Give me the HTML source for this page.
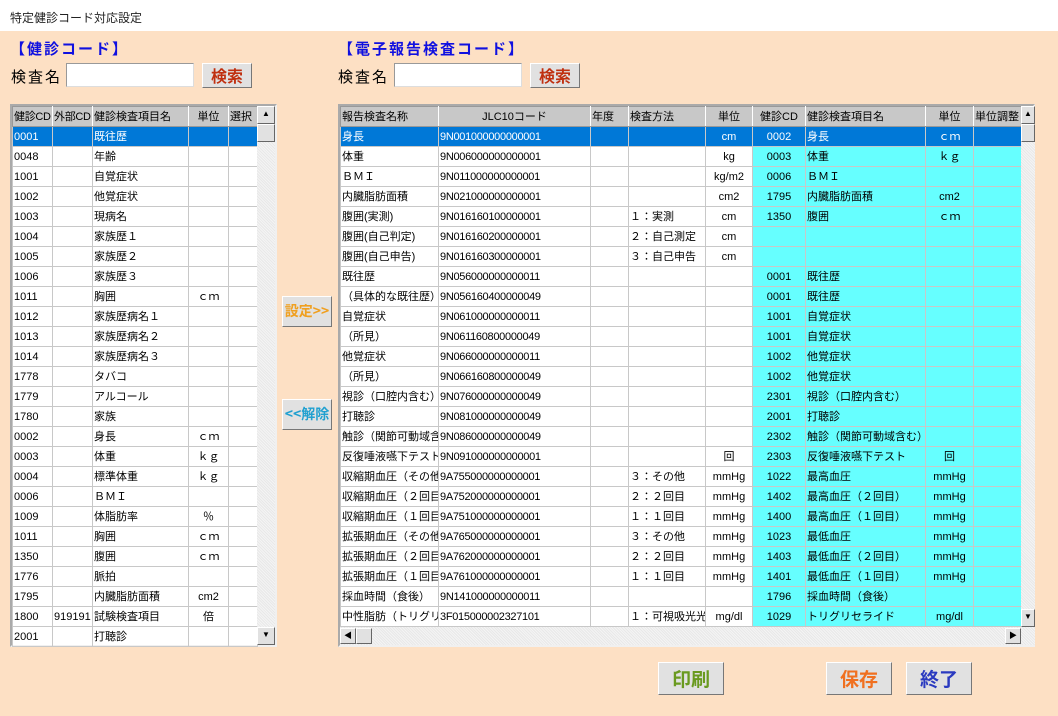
<!DOCTYPE html>
<html><head><meta charset="utf-8"><style>
*{box-sizing:border-box;margin:0;padding:0}
body{width:1058px;height:716px;background:#fde0c4;font-family:"Liberation Sans","Noto Sans CJK JP",sans-serif;position:relative;overflow:hidden}
.title{position:absolute;left:0;top:0;width:1058px;height:31px;background:#fff;font-size:12px;padding:9px 0 0 10px;color:#222}
.lbl{position:absolute;font-size:15px;font-weight:bold;color:#1010e0;letter-spacing:2px}
.sl{position:absolute;font-size:15px;color:#000;letter-spacing:2px}
.inp{position:absolute;width:128px;height:24px;background:#fff;border:1px solid #999;border-right-color:#ddd;border-bottom-color:#ddd}
.btn{position:absolute;background:#e1e1e1;border:1px solid #fff;border-right-color:#777;border-bottom-color:#777;font-weight:bold;text-align:center;font-family:"Noto Sans CJK JP",sans-serif}
.grid{position:absolute;background:#fff;border:2px solid #f0f0f0;border-top-color:#aaa;border-left-color:#aaa}
table{border-collapse:collapse;table-layout:fixed;font-size:11px;font-family:"Liberation Sans","Noto Sans CJK JP",sans-serif}
td,th{height:20px;border:1px solid #c8c8c8;white-space:nowrap;overflow:hidden;padding:0 1px;font-weight:normal;line-height:18px}
th{background:#c8c8c8;border-color:#999;border-right:1px solid #fff;text-align:left}
tr.sel td{background:#0078d7;color:#fff}
.c{text-align:center}
.cy{background:#6ff}
.n{letter-spacing:-0.3px}
.vs{position:absolute;background:#ececec;background-image:repeating-linear-gradient(45deg,#f4f4f4 0 1px,#e8e8e8 1px 2px)}
.ar{position:absolute;background:#e1e1e1;border:1px solid #fff;border-right-color:#666;border-bottom-color:#666;font-size:8px;text-align:center;line-height:14px}
</style></head><body>
<div class="title">特定健診コード対応設定</div>
<div class="lbl" style="left:10px;top:38px">【健診コード】</div>
<div class="lbl" style="left:338px;top:38px">【電子報告検査コード】</div>
<div class="sl" style="left:11px;top:66px">検査名</div>
<div class="inp" style="left:66px;top:63px"></div>
<div class="btn" style="left:202px;top:63px;width:50px;height:25px;color:#c03010;font-size:16px;line-height:22px">検索</div>
<div class="sl" style="left:338px;top:66px">検査名</div>
<div class="inp" style="left:394px;top:63px"></div>
<div class="btn" style="left:530px;top:63px;width:50px;height:25px;color:#c03010;font-size:16px;line-height:22px">検索</div>

<div class="grid" style="left:10px;top:104px;width:267px;height:543px">
<table style="width:245px">
<colgroup><col style="width:40px"><col style="width:40px"><col style="width:96px"><col style="width:40px"><col style="width:29px"></colgroup>
<tr><th class="n">健診CD</th><th class="n">外部CD</th><th>健診検査項目名</th><th class="c">単位</th><th>選択</th></tr>
<tr class="sel"><td>0001</td><td></td><td>既往歴</td><td></td><td></td></tr>
<tr><td>0048</td><td></td><td>年齢</td><td></td><td></td></tr>
<tr><td>1001</td><td></td><td>自覚症状</td><td></td><td></td></tr>
<tr><td>1002</td><td></td><td>他覚症状</td><td></td><td></td></tr>
<tr><td>1003</td><td></td><td>現病名</td><td></td><td></td></tr>
<tr><td>1004</td><td></td><td>家族歴１</td><td></td><td></td></tr>
<tr><td>1005</td><td></td><td>家族歴２</td><td></td><td></td></tr>
<tr><td>1006</td><td></td><td>家族歴３</td><td></td><td></td></tr>
<tr><td>1011</td><td></td><td>胸囲</td><td class="c">ｃｍ</td><td></td></tr>
<tr><td>1012</td><td></td><td>家族歴病名１</td><td></td><td></td></tr>
<tr><td>1013</td><td></td><td>家族歴病名２</td><td></td><td></td></tr>
<tr><td>1014</td><td></td><td>家族歴病名３</td><td></td><td></td></tr>
<tr><td>1778</td><td></td><td>タバコ</td><td></td><td></td></tr>
<tr><td>1779</td><td></td><td>アルコール</td><td></td><td></td></tr>
<tr><td>1780</td><td></td><td>家族</td><td></td><td></td></tr>
<tr><td>0002</td><td></td><td>身長</td><td class="c">ｃｍ</td><td></td></tr>
<tr><td>0003</td><td></td><td>体重</td><td class="c">ｋｇ</td><td></td></tr>
<tr><td>0004</td><td></td><td>標準体重</td><td class="c">ｋｇ</td><td></td></tr>
<tr><td>0006</td><td></td><td>ＢＭＩ</td><td></td><td></td></tr>
<tr><td>1009</td><td></td><td>体脂肪率</td><td class="c">％</td><td></td></tr>
<tr><td>1011</td><td></td><td>胸囲</td><td class="c">ｃｍ</td><td></td></tr>
<tr><td>1350</td><td></td><td>腹囲</td><td class="c">ｃｍ</td><td></td></tr>
<tr><td>1776</td><td></td><td>脈拍</td><td></td><td></td></tr>
<tr><td>1795</td><td></td><td>内臓脂肪面積</td><td class="c">cm2</td><td></td></tr>
<tr><td>1800</td><td>919191</td><td>試験検査項目</td><td class="c">倍</td><td></td></tr>
<tr><td>2001</td><td></td><td>打聴診</td><td></td><td></td></tr>
</table>
<div class="vs" style="left:245px;top:0;width:18px;height:539px"></div>
<div class="ar" style="left:245px;top:0;width:18px;height:18px">▲</div>
<div class="ar" style="left:245px;top:18px;width:18px;height:18px"></div>
<div class="ar" style="left:245px;top:521px;width:18px;height:18px">▼</div>
</div>

<div class="btn" style="left:282px;top:296px;width:50px;height:31px;color:#f0a020;font-size:14px;line-height:29px">設定&gt;&gt;</div>
<div class="btn" style="left:282px;top:399px;width:50px;height:31px;color:#20a0d0;font-size:14px;line-height:29px">&lt;&lt;解除</div>

<div class="grid" style="left:338px;top:104px;width:697px;height:543px">
<table style="width:681px">
<colgroup><col style="width:98px"><col style="width:152px"><col style="width:38px"><col style="width:77px"><col style="width:47px"><col style="width:53px"><col style="width:120px"><col style="width:48px"><col style="width:48px"></colgroup>
<tr><th>報告検査名称</th><th class="c">JLC10コード</th><th>年度</th><th>検査方法</th><th class="c">単位</th><th class="c">健診CD</th><th>健診検査項目名</th><th class="c">単位</th><th>単位調整</th></tr>
<tr class="sel"><td>身長</td><td class="n">9N001000000000001</td><td></td><td></td><td class="c">cm</td><td class="c">0002</td><td>身長</td><td class="c">ｃｍ</td><td></td></tr>
<tr><td>体重</td><td class="n">9N006000000000001</td><td></td><td></td><td class="c">kg</td><td class="c cy">0003</td><td class="cy">体重</td><td class="c cy">ｋｇ</td><td class="cy"></td></tr>
<tr><td>ＢＭＩ</td><td class="n">9N011000000000001</td><td></td><td></td><td class="c">kg/m2</td><td class="c cy">0006</td><td class="cy">ＢＭＩ</td><td class="cy"></td><td class="cy"></td></tr>
<tr><td>内臓脂肪面積</td><td class="n">9N021000000000001</td><td></td><td></td><td class="c">cm2</td><td class="c cy">1795</td><td class="cy">内臓脂肪面積</td><td class="c cy">cm2</td><td class="cy"></td></tr>
<tr><td>腹囲(実測)</td><td class="n">9N016160100000001</td><td></td><td>１：実測</td><td class="c">cm</td><td class="c cy">1350</td><td class="cy">腹囲</td><td class="c cy">ｃｍ</td><td class="cy"></td></tr>
<tr><td>腹囲(自己判定)</td><td class="n">9N016160200000001</td><td></td><td>２：自己測定</td><td class="c">cm</td><td class="cy"></td><td class="cy"></td><td class="cy"></td><td class="cy"></td></tr>
<tr><td>腹囲(自己申告)</td><td class="n">9N016160300000001</td><td></td><td>３：自己申告</td><td class="c">cm</td><td class="cy"></td><td class="cy"></td><td class="cy"></td><td class="cy"></td></tr>
<tr><td>既往歴</td><td class="n">9N056000000000011</td><td></td><td></td><td></td><td class="c cy">0001</td><td class="cy">既往歴</td><td class="cy"></td><td class="cy"></td></tr>
<tr><td>（具体的な既往歴）</td><td class="n">9N056160400000049</td><td></td><td></td><td></td><td class="c cy">0001</td><td class="cy">既往歴</td><td class="cy"></td><td class="cy"></td></tr>
<tr><td>自覚症状</td><td class="n">9N061000000000011</td><td></td><td></td><td></td><td class="c cy">1001</td><td class="cy">自覚症状</td><td class="cy"></td><td class="cy"></td></tr>
<tr><td>（所見）</td><td class="n">9N061160800000049</td><td></td><td></td><td></td><td class="c cy">1001</td><td class="cy">自覚症状</td><td class="cy"></td><td class="cy"></td></tr>
<tr><td>他覚症状</td><td class="n">9N066000000000011</td><td></td><td></td><td></td><td class="c cy">1002</td><td class="cy">他覚症状</td><td class="cy"></td><td class="cy"></td></tr>
<tr><td>（所見）</td><td class="n">9N066160800000049</td><td></td><td></td><td></td><td class="c cy">1002</td><td class="cy">他覚症状</td><td class="cy"></td><td class="cy"></td></tr>
<tr><td>視診（口腔内含む）</td><td class="n">9N076000000000049</td><td></td><td></td><td></td><td class="c cy">2301</td><td class="cy">視診（口腔内含む）</td><td class="cy"></td><td class="cy"></td></tr>
<tr><td>打聴診</td><td class="n">9N081000000000049</td><td></td><td></td><td></td><td class="c cy">2001</td><td class="cy">打聴診</td><td class="cy"></td><td class="cy"></td></tr>
<tr><td>触診（関節可動域含む）</td><td class="n">9N086000000000049</td><td></td><td></td><td></td><td class="c cy">2302</td><td class="cy">触診（関節可動域含む）</td><td class="cy"></td><td class="cy"></td></tr>
<tr><td>反復唾液嚥下テスト</td><td class="n">9N091000000000001</td><td></td><td></td><td class="c">回</td><td class="c cy">2303</td><td class="cy">反復唾液嚥下テスト</td><td class="c cy">回</td><td class="cy"></td></tr>
<tr><td>収縮期血圧（その他）</td><td class="n">9A755000000000001</td><td></td><td>３：その他</td><td class="c">mmHg</td><td class="c cy">1022</td><td class="cy">最高血圧</td><td class="c cy">mmHg</td><td class="cy"></td></tr>
<tr><td>収縮期血圧（２回目）</td><td class="n">9A752000000000001</td><td></td><td>２：２回目</td><td class="c">mmHg</td><td class="c cy">1402</td><td class="cy">最高血圧（２回目）</td><td class="c cy">mmHg</td><td class="cy"></td></tr>
<tr><td>収縮期血圧（１回目）</td><td class="n">9A751000000000001</td><td></td><td>１：１回目</td><td class="c">mmHg</td><td class="c cy">1400</td><td class="cy">最高血圧（１回目）</td><td class="c cy">mmHg</td><td class="cy"></td></tr>
<tr><td>拡張期血圧（その他）</td><td class="n">9A765000000000001</td><td></td><td>３：その他</td><td class="c">mmHg</td><td class="c cy">1023</td><td class="cy">最低血圧</td><td class="c cy">mmHg</td><td class="cy"></td></tr>
<tr><td>拡張期血圧（２回目）</td><td class="n">9A762000000000001</td><td></td><td>２：２回目</td><td class="c">mmHg</td><td class="c cy">1403</td><td class="cy">最低血圧（２回目）</td><td class="c cy">mmHg</td><td class="cy"></td></tr>
<tr><td>拡張期血圧（１回目）</td><td class="n">9A761000000000001</td><td></td><td>１：１回目</td><td class="c">mmHg</td><td class="c cy">1401</td><td class="cy">最低血圧（１回目）</td><td class="c cy">mmHg</td><td class="cy"></td></tr>
<tr><td>採血時間（食後）</td><td class="n">9N141000000000011</td><td></td><td></td><td></td><td class="c cy">1796</td><td class="cy">採血時間（食後）</td><td class="cy"></td><td class="cy"></td></tr>
<tr><td>中性脂肪（トリグリセリド）</td><td class="n">3F015000002327101</td><td></td><td>１：可視吸光光度法</td><td class="c">mg/dl</td><td class="c cy">1029</td><td class="cy">トリグリセライド</td><td class="c cy">mg/dl</td><td class="cy"></td></tr>
</table>
<div class="vs" style="left:681px;top:0;width:14px;height:539px"></div>
<div class="ar" style="left:681px;top:0;width:14px;height:18px">▲</div>
<div class="ar" style="left:681px;top:18px;width:14px;height:18px"></div>
<div class="ar" style="left:681px;top:503px;width:14px;height:18px">▼</div>
<div class="vs" style="left:0;top:521px;width:681px;height:18px"></div>
<div class="ar" style="left:0;top:522px;width:16px;height:16px">◀</div>
<div class="ar" style="left:16px;top:522px;width:16px;height:16px"></div>
<div class="ar" style="left:665px;top:522px;width:16px;height:16px">▶</div>
</div>

<div class="btn" style="left:658px;top:662px;width:66px;height:33px;color:#6a9a20;font-size:19px;line-height:31px">印刷</div>
<div class="btn" style="left:826px;top:662px;width:66px;height:33px;color:#f07020;font-size:19px;line-height:31px">保存</div>
<div class="btn" style="left:906px;top:662px;width:66px;height:33px;color:#2a3ac0;font-size:19px;line-height:31px">終了</div>
</body></html>
